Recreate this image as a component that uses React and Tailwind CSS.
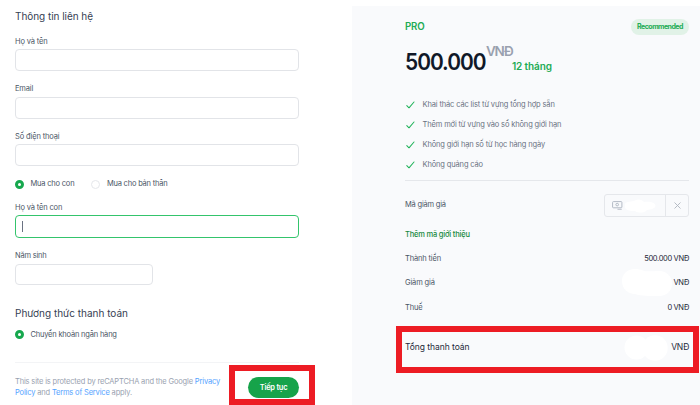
import { useState } from "react";

const features = [
  "Khai thác các list từ vựng tổng hợp sẵn",
  "Thêm mới từ vựng vào sổ không giới hạn",
  "Không giới hạn số từ học hàng ngày",
  "Không quảng cáo",
];

function Field({ label, value, onChange }) {
  return (
    <label className="block h-[47.5px]">
      <span className="flex h-[17px] items-center pt-[2px] text-[7.5px] tracking-[-0.16px] text-gray-600">
        {label}
      </span>
      <input
        className="block h-[22px] w-[284px] rounded-[4px] border border-[#e2e4e8] bg-white px-2 text-[8px] outline-none"
        value={value}
        onChange={(e) => onChange(e.target.value)}
      />
    </label>
  );
}

function Radio({ label, checked, onClick }) {
  return (
    <button
      type="button"
      onClick={onClick}
      className="flex items-center text-[7.5px] tracking-[-0.2px] text-gray-600"
    >
      <span
        className={
          checked
            ? "mr-[6.5px] size-[9px] rounded-full border-[3px] border-[#16a84e] bg-white"
            : "mr-[6.5px] size-[9px] rounded-full border border-gray-200 bg-white"
        }
      />
      {label}
    </button>
  );
}

function Check() {
  return (
    <svg viewBox="0 0 9 8" className="h-[8px] w-[9px]" fill="none">
      <path
        d="M.8 4.6 3 6.800 8 1"
        stroke="#22b35b"
        strokeWidth="1.05"
        strokeLinecap="round"
        strokeLinejoin="round"
      />
    </svg>
  );
}

function ContactForm() {
  const [name, setName] = useState("");
  const [email, setEmail] = useState("");
  const [phone, setPhone] = useState("");
  const [buyFor, setBuyFor] = useState("child");

  return (
    <div className="flex w-[352px] shrink-0 flex-col pl-[15px]">
      <h2 className="mt-[9px] flex h-[14px] items-center text-[10px] tracking-[-0.05px] text-gray-700">
        Thông tin liên hệ
      </h2>

      <div className="mt-[9px]">
        <Field label="Họ và tên" value={name} onChange={setName} />
        <Field label="Email" value={email} onChange={setEmail} />
        <Field label="Số điện thoại" value={phone} onChange={setPhone} />
      </div>

      <div className="mt-[4px] flex h-[11px] items-center gap-[17px]">
        <Radio
          label="Mua cho con"
          checked={buyFor === "child"}
          onClick={() => setBuyFor("child")}
        />
        <Radio
          label="Mua cho bản thân"
          checked={buyFor === "self"}
          onClick={() => setBuyFor("self")}
        />
      </div>

      <div className="mt-[10px] flex h-[16px] items-center pt-[1px] text-[7.5px] tracking-[-0.15px] text-gray-600">
        Họ và tên con
      </div>
      <div className="flex h-[23px] w-[284px] items-center rounded-[4px] border border-[#34c46c] bg-white pl-[6px]">
        <span className="h-[11px] w-px bg-gray-500" />
      </div>

      <div className="mt-[9px] flex h-[16px] items-center pt-[1px] text-[7.5px] tracking-[-0.2px] text-gray-600">
        Năm sinh
      </div>
      <div className="mt-px h-[21px] w-[138px] rounded-[4px] border border-[#e2e4e8] bg-white" />

      <h2 className="mt-[21px] flex h-[14px] items-center text-[10px] tracking-[-0.01px] text-gray-700">
        Phương thức thanh toán
      </h2>
      <div className="mt-[9px] flex h-[11px] items-center">
        <Radio label="Chuyển khoản ngân hàng" checked />
      </div>

      <div className="mt-[22px] h-px w-[284px] bg-gray-100" />

      <div className="mt-[2px] flex">
        <p className="mt-[11px] w-[214px] text-[7.5px] leading-[11px] tracking-[-0.165px] whitespace-nowrap text-gray-400">
          This site is protected by reCAPTCHA and the Google{" "}
          <span className="text-blue-400">Privacy</span>
          <br />
          <span className="text-blue-400">Policy</span> and{" "}
          <span className="text-blue-400">Terms of Service</span> apply.
        </p>
        <div className="flex h-[40px] w-[86px] justify-end border-[6px] border-[#ed1c24] bg-white pt-[6px] pr-[10px]">
          <button className="h-[21px] w-[51px] rounded-full bg-[#16a34a] text-[7.5px] font-semibold tracking-[-0.25px] text-white">
            Tiếp tục
          </button>
        </div>
      </div>
    </div>
  );
}

function Row({ label, children }) {
  return (
    <div className="flex h-[24.5px] items-center justify-between text-[7.5px]">
      <span className="tracking-[-0.15px] text-gray-600">{label}</span>
      <span className="flex items-center tracking-[-0.35px] text-gray-800">
        {children}
      </span>
    </div>
  );
}

function Summary() {
  return (
    <div className="mt-[6px] h-[399px] w-[348px] bg-[#f9fafc]">
      <div className="pr-[11px] pl-[53px]">
        <div className="flex h-[42px] items-center justify-between">
          <span className="text-[9.7px] font-semibold tracking-[-0.2px] text-[#22ab54]">
            PRO
          </span>
          <span className="flex h-[16px] w-[58px] items-center justify-center rounded-full bg-[#e1f2e7] text-[7px] font-bold tracking-[-0.5px] text-[#22ab54]">
            Recommended
          </span>
        </div>

        <div className="flex h-[30px] items-start leading-none">
          <span className="mt-[3px] w-[81px] origin-left scale-x-[0.93] text-[22.5px] font-semibold tracking-[-1.1px] whitespace-nowrap text-gray-900">
            500.000
          </span>
          <span className="-mt-[3px] w-[26px] text-[13.5px] font-semibold tracking-[-1.3px] whitespace-nowrap text-gray-400">
            VNĐ
          </span>
          <span className="mt-[13px] text-[10px] font-semibold tracking-[-0.12px] whitespace-nowrap text-[#22ab54]">
            12 tháng
          </span>
        </div>

        <ul className="mt-[17px]">
          {features.map((item) => (
            <li
              key={item}
              className="flex h-[20px] items-center gap-[7.5px] pl-[1px] text-[7.5px] tracking-[-0.14px] text-gray-500"
            >
              <Check />
              {item}
            </li>
          ))}
        </ul>

        <div className="mt-[5px] h-px bg-gray-200" />

        <div className="mt-[13px] flex h-[23px] items-center justify-between">
          <span className="pb-[2px] text-[7.5px] tracking-[-0.2px] text-gray-600">
            Mã giảm giá
          </span>
          <div className="flex h-[23px] w-[85px] rounded-[3px] border border-gray-200">
            <div className="flex w-[61px] items-center border-r border-gray-200 pl-[7px]">
              <svg
                viewBox="0 0 11 9"
                className="h-[9px] w-[11px] shrink-0"
                fill="none"
                stroke="#b3bac5"
              >
                <rect x=".6" y=".6" width="9.3" height="6.2" rx=".8" />
                <circle cx="5.2" cy="3.6" r="1.3" />
                <path d="M5.5 8.300h4.200" strokeWidth=".9" />
              </svg>
              <svg
                viewBox="0 0 31 14"
                className="ml-[2px] h-[14px] w-[31px] shrink-0"
                fill="white"
              >
                <path d="M0 5C1 2 7 3 10 1.500c3-2 7-1 9 1.500 5-1 11 0 11.500 3.500 0 3-4.500 4-8.500 4.500-3 3.500-9 3-12 1C6 12.500 0 11 0 8Z" />
              </svg>
            </div>
            <button className="flex flex-1 items-center justify-center">
              <svg
                viewBox="0 0 7 7"
                className="size-[7px]"
                fill="none"
                stroke="#aeb4be"
                strokeWidth=".9"
              >
                <path d="m.5.5 6 6m0-6-6 6" />
              </svg>
            </button>
          </div>
        </div>

        <div className="mt-[8px] flex h-[18px] items-center pt-[1px] text-[7.5px] font-medium tracking-[-0.19px] text-[#16893e]">
          Thêm mã giới thiệu
        </div>

        <div className="mt-[3px]">
          <Row label="Thành tiền">500.000 VNĐ</Row>
          <Row label="Giảm giá">
            <svg
              viewBox="0 0 50 27"
              className="mr-[2px] -my-1 h-[27px] w-[50px]"
              fill="white"
            >
              <path d="M13 0C5 0 0 5 0 12c0 8 6 13 13 13 6 2 15 2 24 2 8 0 13-5 13-12.500S44 2 38 2c-7 0-13 1-17-.5C19 .5 16 0 13 0Z" />
            </svg>
            VNĐ
          </Row>
          <Row label="Thuế">0 VNĐ</Row>
        </div>
      </div>

      <div className="mt-[6px] ml-[44px] flex h-[47px] w-[303px] items-center justify-between border-[6px] border-[#ed1c24] pr-[4px] pb-[3px] pl-[3px] text-[8.5px] text-gray-800">
        <span className="tracking-[-0.05px]">Tổng thanh toán</span>
        <span className="flex items-center tracking-[-0.3px]">
          <svg
            viewBox="0 0 44 26"
            className="mr-[3px] h-[26px] w-[44px]"
            fill="white"
          >
            <circle cx="12.500" cy="12.500" r="12" />
            <circle cx="31" cy="13" r="12.700" />
          </svg>
          VNĐ
        </span>
      </div>
    </div>
  );
}

export default function App() {
  return (
    <main className="flex h-[405px] w-[700px] overflow-hidden bg-white font-['Inter',sans-serif]">
      <ContactForm />
      <Summary />
    </main>
  );
}
